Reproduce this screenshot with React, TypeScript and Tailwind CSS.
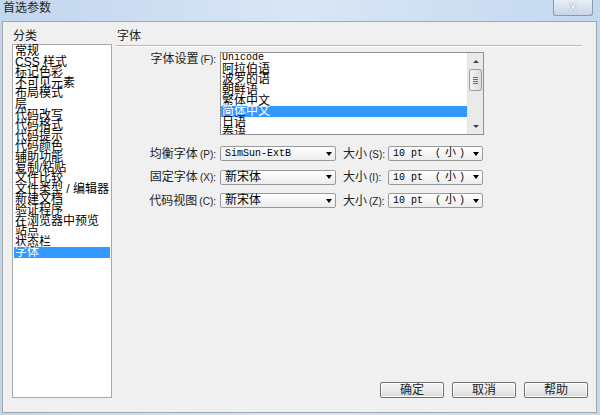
const categories = [
   '常规', 'CSS 样式', '标记色彩', '不可见元素', '布局模式', '层', '代码改写', '代码格式',
   '代码提示', '代码颜色', '辅助功能', '复制/粘贴', '文件比较', '文件类型 / 编辑器',
   '新建文档', '验证程序', '在浏览器中预览', '站点', '状态栏', '字体',
]

const encodings = ['Unicode', '阿拉伯语', '波罗的语', '朝鲜语', '繁体中文', '简体中文', '日语', '泰语']

function Label({ text, hotkey, className }: { text: string, hotkey: string, className: string }) {
   return (
      <div className={`${className} text-[12px] text-[#222] whitespace-pre`}>
         {text}
         <span className="text-[10px] ml-[2px]">({hotkey}):</span>
      </div>
   )
}

function Arrow() {
   return <span className="w-0 h-0 border-l-[3.5px] border-r-[3.5px] border-t-[4px] border-l-transparent border-r-transparent border-t-black" />
}

function FaceCombo({ value, mono }: { value: string, mono?: boolean }) {
   return (
      <div className="w-[116px] h-[15px] flex items-center border border-[#9a9a9a] rounded-[2px] bg-gradient-to-b from-white to-[#ececec] pl-[4px] pr-[3px]">
         <span className={`flex-1 leading-[13px] ${mono ? "font-['Liberation_Mono',monospace] text-[10px]" : "text-[12px]"}`}>{value}</span>
         <Arrow />
      </div>
   )
}

function SizeCombo() {
   return (
      <div className="w-[95px] h-[15px] flex items-center border border-[#9a9a9a] rounded-[2px] bg-gradient-to-b from-white to-[#ececec] pl-[4px] pr-[3px]">
         <div className="flex-1 flex items-center leading-[13px] font-['Liberation_Mono','Noto_Sans_CJK_SC',monospace] text-[10px]">
            <span>10 pt</span>
            <span className="ml-[12px]">(</span>
            <span className="ml-[4px] text-[11px]">小</span>
            <span className="ml-[3px]">)</span>
         </div>
         <Arrow />
      </div>
   )
}

function Row({ label, hotkey, face, mono, sizeKey }: { label: string, hotkey: string, face: string, mono?: boolean, sizeKey: string }) {
   return (
      <div className="flex items-center h-[15px]">
         <Label text={label} hotkey={hotkey} className="w-[104px] pr-[4px] text-right" />
         <FaceCombo value={face} mono={mono} />
         <Label text="大小" hotkey={sizeKey} className="w-[52px] pl-[7px]" />
         <SizeCombo />
      </div>
   )
}

export default function App() {
   return (
      <div className="w-[600px] h-[415px] flex flex-col bg-gradient-to-r from-[#c2d6ee] via-[#d9e6f5] to-[#c4d8ef] font-['Liberation_Sans','Noto_Sans_CJK_SC',sans-serif] text-black overflow-hidden">
         {/* Title bar */}
         <div className="h-[21px] flex items-start pl-[3px] pr-[7px]">
            <span className="text-[12px] leading-[15px] pt-[1px] text-[#1e1e1e]">首选参数</span>
            <div className="flex-1" />
            <div className="w-[40px] h-[16px] rounded-b-[3px] border border-t-0 border-[#8c9bb0] bg-gradient-to-b from-[#e8eef6] to-[#c9d6e6] flex items-center justify-center">
               <span className="text-[11px] leading-none font-bold text-[#f4f6fa] [text-shadow:0_0_1px_#55667d]">X</span>
            </div>
         </div>

         {/* Main panel */}
         <div className="mx-[2px] mr-[3px] h-[392px] border border-[#a6a6a6] bg-[#f0f0f0] flex pt-[4px] pb-[14px] pl-[9px]">
            {/* Categories */}
            <div className="w-[100px] flex flex-col">
               <div className="h-[18px] flex items-end pl-[1px] text-[12px] leading-[16px] text-[#222]">分类</div>
               <div className="flex-1 border border-[#a9a9a9] bg-white px-[1px] pt-px text-[12px] leading-[10.6px]">
                  {categories.map(c => (
                     <div
                        key={c}
                        className={`h-[10.6px] pl-[1px] whitespace-pre ${c === '字体' ? 'bg-[#3399ff] text-white' : ''}`}>
                        {c}
                     </div>
                  ))}
               </div>
            </div>

            {/* Settings */}
            <div className="ml-[4px] w-[472px] flex flex-col">
               <div className="h-[18px] flex items-end pl-[1px] text-[12px] leading-[16px] text-[#222]">字体</div>
               <div className="mt-[1px] mr-[6px] h-[2px] border-t border-[#b9b9b9] border-b border-b-white" />

               {/* Encoding list */}
               <div className="mt-[5px] flex items-start">
                  <Label text="字体设置" hotkey="F" className="w-[104px] pr-[4px] pt-[1px] text-right leading-[13px]" />
                  <div className="w-[264px] h-[83px] border border-[#8e8f8f] bg-white flex overflow-hidden">
                     <div className="flex-1 text-[12px] leading-[10.7px] overflow-hidden">
                        {encodings.map(e => (
                           <div
                              key={e}
                              className={`h-[10.7px] pl-[1px] ${e === 'Unicode' ? "font-['Liberation_Mono',monospace] text-[10px]" : ''} ${e === '简体中文' ? 'bg-[#3399ff] text-white' : ''}`}>
                              {e}
                           </div>
                        ))}
                     </div>
                     {/* Scrollbar */}
                     <div className="w-[16px] bg-[#eaeaea] border-l border-[#e2e2e2] flex flex-col items-center">
                        <div className="h-[16px] flex items-center justify-center">
                           <span className="w-0 h-0 border-l-[3px] border-r-[3px] border-b-[3px] border-l-transparent border-r-transparent border-b-[#444]" />
                        </div>
                        <div className="w-[13px] h-[22px] rounded-[2px] border border-[#9b9b9b] bg-gradient-to-r from-[#f4f4f4] to-[#dcdcdc] flex flex-col items-center justify-center gap-[1px]">
                           <span className="w-[5px] h-px bg-[#6b6b6b]" />
                           <span className="w-[5px] h-px bg-[#6b6b6b]" />
                           <span className="w-[5px] h-px bg-[#6b6b6b]" />
                           <span className="w-[5px] h-px bg-[#6b6b6b]" />
                        </div>
                        <div className="flex-1" />
                        <div className="h-[16px] flex items-center justify-center">
                           <span className="w-0 h-0 border-l-[3px] border-r-[3px] border-t-[3px] border-l-transparent border-r-transparent border-t-[#444]" />
                        </div>
                     </div>
                  </div>
               </div>

               {/* Font rows */}
               <div className="mt-[11px] flex flex-col gap-[8.5px]">
                  <Row label="均衡字体" hotkey="P" face="SimSun-ExtB" mono sizeKey="S" />
                  <Row label="固定字体" hotkey="X" face="新宋体" sizeKey="I" />
                  <Row label="代码视图" hotkey="C" face="新宋体" sizeKey="Z" />
               </div>

               <div className="flex-1" />

               {/* Buttons */}
               <div className="flex justify-end gap-[8px]">
                  {['确定', '取消', '帮助'].map(b => (
                     <button
                        key={b}
                        className="w-[64px] h-[16px] rounded-[2px] border border-[#707070] bg-gradient-to-b from-[#f3f3f3] via-[#ebebeb] to-[#d8d8d8] text-[12px] leading-[14px] text-[#222] shadow-[inset_0_0_0_1px_#fcfcfc]">
                        {b}
                     </button>
                  ))}
               </div>
            </div>
         </div>
      </div>
   )
}
